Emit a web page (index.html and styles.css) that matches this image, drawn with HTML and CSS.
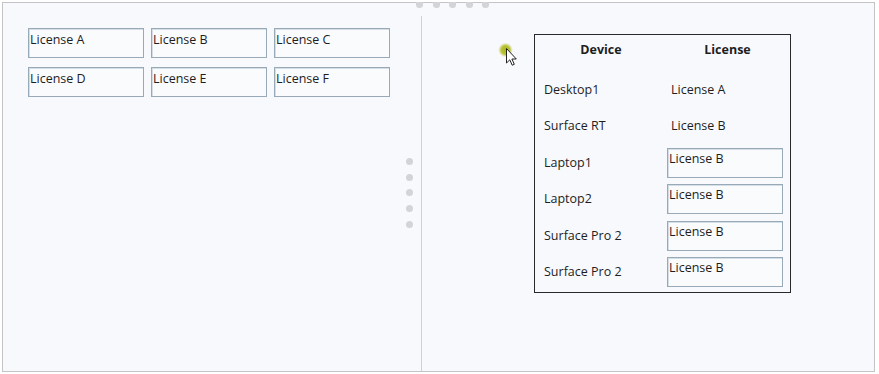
FILE: index.html
```html
<!DOCTYPE html>
<html>
<head>
<meta charset="utf-8">
<link rel="stylesheet" href="styles.css">
</head>
<body>
<div class="frame">
  <div class="top-dots">
    <span class="dot"></span><span class="dot"></span><span class="dot"></span><span class="dot"></span><span class="dot"></span>
  </div>
  <div class="side-dots">
    <span class="dot"></span><span class="dot"></span><span class="dot"></span><span class="dot"></span><span class="dot"></span>
  </div>
  <div class="pane left">
    <div class="choices">
      <div class="box">License A</div>
      <div class="box">License B</div>
      <div class="box">License C</div>
      <div class="box">License D</div>
      <div class="box">License E</div>
      <div class="box">License F</div>
    </div>
  </div>
  <div class="divider"></div>
  <div class="pane right">
    <div class="table">
      <div class="th dev">Device</div>
      <div class="th lic">License</div>
      <div class="spacer"></div>
      <div class="td dev">Desktop1</div>
      <div class="td lic plain">License A</div>
      <div class="td dev">Surface RT</div>
      <div class="td lic plain">License B</div>
      <div class="td dev">Laptop1</div>
      <div class="td lic"><div class="box slot">License B</div></div>
      <div class="td dev">Laptop2</div>
      <div class="td lic"><div class="box slot">License B</div></div>
      <div class="td dev">Surface Pro 2</div>
      <div class="td lic"><div class="box slot">License B</div></div>
      <div class="td dev">Surface Pro 2</div>
      <div class="td lic"><div class="box slot">License B</div></div>
    </div>
  </div>
  <div class="cursor">
    <svg width="24" height="26" viewBox="0 0 24 26">
      <defs>
        <radialGradient id="halo" cx="50%" cy="50%" r="50%">
          <stop offset="0%" stop-color="#a8b418"/>
          <stop offset="60%" stop-color="#bcc43a"/>
          <stop offset="100%" stop-color="#d8dc9a" stop-opacity="0"/>
        </radialGradient>
      </defs>
      <circle cx="7.5" cy="7" r="7.5" fill="url(#halo)"/>
      <path d="M8.5 5.5 L8.5 20 L11.8 16.8 L14.2 22.2 L16.3 21.3 L13.9 16 L18.3 16 Z" fill="#ffffff" stroke="#222" stroke-width="1" stroke-linejoin="round"/>
    </svg>
  </div>
</div>
</body>
</html>
```
FILE: styles.css
```css
html, body {
  margin: 0;
  padding: 0;
  background: #ffffff;
}
body {
  font-family: "Open Sans", "Noto Sans", "Liberation Sans", sans-serif;
  font-size: 12.5px;
  color: #1e1e1e;
}
.frame {
  position: relative;
  margin: 2px 0 0 2px;
  width: 871px;
  height: 368px;
  border: 1px solid #c4c4c6;
  background: #f8f9fd;
  display: grid;
  grid-template-columns: 418px 1px 1fr;
}
.pane.left {
  padding: 25px 0 0 25px;
}
.choices {
  display: grid;
  grid-template-columns: repeat(3, 116px);
  grid-auto-rows: 30px;
  column-gap: 7px;
  row-gap: 9px;
}
.box {
  box-sizing: border-box;
  border: 1px solid #98aab8;
  box-shadow: inset 1px 1px 0 #d6dee5;
  background: #f9fbfd;
  padding: 3px 0 0 1px;
  line-height: 16px;
  white-space: nowrap;
}
.divider {
  margin-top: 13px;
  background: #cfd0d4;
}
.pane.right {
  padding: 31px 0 0 112px;
}
.table {
  box-sizing: border-box;
  width: 257px;
  height: 259px;
  border: 1px solid #2a2a2a;
  display: grid;
  grid-template-columns: 132px 1fr;
  grid-template-rows: 28px 8px repeat(6, 36.5px);
  align-items: center;
}
.th {
  font-weight: bold;
  text-align: center;
  padding-top: 1px;
}
.th.lic {
  padding-right: 2px;
}
.spacer {
  grid-column: 1 / 3;
}
.td.dev {
  padding-left: 9px;
}
.td.lic.plain {
  padding-left: 4px;
}
.td.lic {
  padding-right: 7px;
}
.slot {
  height: 30px;
  width: 116px;
  margin-top: 1px;
  padding-top: 2px;
}
.dot {
  width: 7px;
  height: 7px;
  border-radius: 50%;
  background: #d3d4d8;
  display: block;
}
.top-dots {
  position: absolute;
  left: 413px;
  top: -1px;
  display: flex;
  gap: 9.5px;
}
.top-dots .dot {
  width: 7px;
  height: 6px;
  border-radius: 0 0 50% 50%;
}
.side-dots {
  position: absolute;
  left: 403px;
  top: 155px;
  display: flex;
  flex-direction: column;
  gap: 8.7px;
}
.cursor {
  position: absolute;
  left: 495px;
  top: 40px;
}
```
